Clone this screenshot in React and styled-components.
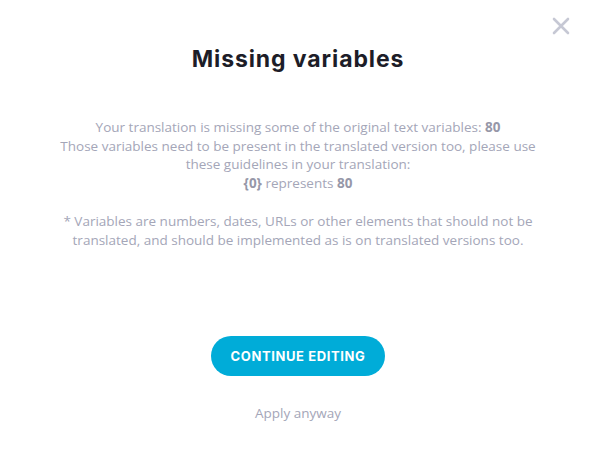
import React from 'react';
import styled, { createGlobalStyle } from 'styled-components';

const GlobalStyle = createGlobalStyle`
  html, body {
    margin: 0;
    padding: 0;
    background: #ffffff;
  }
  * { box-sizing: border-box; }
`;

const Modal = styled.div`
  position: relative;
  width: 596px;
  height: 476px;
  background: #fff;
  display: flex;
  flex-direction: column;
  align-items: center;
  padding: 44px 50px 0;
  font-family: 'Open Sans', 'Liberation Sans', sans-serif;
`;

const CloseButton = styled.button`
  position: absolute;
  top: 17px;
  right: 26px;
  width: 18px;
  height: 18px;
  padding: 0;
  border: 0;
  background: none;
  cursor: pointer;
  & svg {
    display: block;
  }
`;

const Title = styled.h1`
  margin: 0;
  font-family: Inter, 'Noto Sans', sans-serif;
  font-weight: 700;
  font-size: 23px;
  line-height: 30px;
  color: #1d1d28;
  letter-spacing: 0.9px;
`;

const Body = styled.div`
  margin-top: 44px;
  text-align: center;
  color: #a4a6b8;
  font-size: 13.5px;
  line-height: 18.5px;
  & p {
    margin: 0;
  }
  & b {
    font-weight: 700;
    color: #9697a8;
  }
`;

const Note = styled.p`
  && {
    margin-top: 20px;
    line-height: 19px;
  }
`;

const PrimaryButton = styled.button`
  margin-top: 86px;
  height: 40px;
  padding: 0 20px;
  border: 0;
  border-radius: 20px;
  background: #00acd8;
  color: #fff;
  font-family: Inter, 'Noto Sans', sans-serif;
  font-weight: 700;
  font-size: 13px;
  letter-spacing: 0.6px;
  cursor: pointer;
`;

const LinkButton = styled.button`
  margin-top: 28px;
  border: 0;
  background: none;
  padding: 0;
  font-family: 'Open Sans', 'Liberation Sans', sans-serif;
  font-size: 13.5px;
  color: #a4a6b8;
  cursor: pointer;
`;

export default function App() {
  return (
    <>
      <GlobalStyle />
      <Modal>
        <CloseButton aria-label="Close">
          <svg width="18" height="18" viewBox="0 0 18 18">
            <path d="M2 2 L16 16 M16 2 L2 16" stroke="#c6c8d4" strokeWidth="2.6" strokeLinecap="round" />
          </svg>
        </CloseButton>
        <Title>Missing variables</Title>
        <Body>
          <p>
            Your translation is missing some of the original text variables: <b>80</b>
            <br />
            Those variables need to be present in the translated version too, please use
            <br />
            these guidelines in your translation:
            <br />
            <b>{'{0}'}</b> represents <b>80</b>
          </p>
          <Note>
            * Variables are numbers, dates, URLs or other elements that should not be
            <br />
            translated, and should be implemented as is on translated versions too.
          </Note>
        </Body>
        <PrimaryButton>CONTINUE EDITING</PrimaryButton>
        <LinkButton>Apply anyway</LinkButton>
      </Modal>
    </>
  );
}
